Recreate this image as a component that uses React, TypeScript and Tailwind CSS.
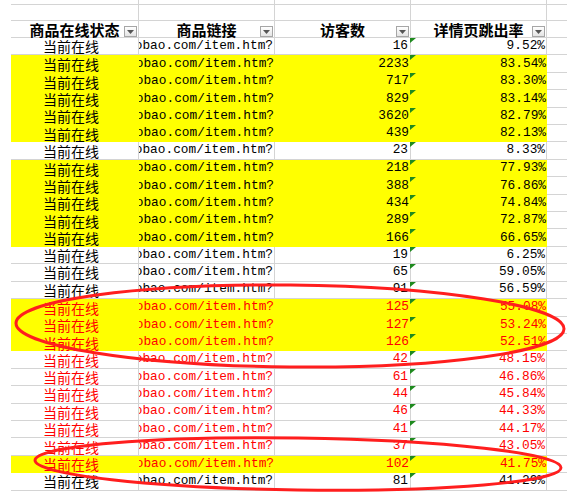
import React from "react";

type Row = { visits: number; rate: string; yellow?: boolean; red?: boolean };

const rows: Row[] = [
  { visits: 16, rate: "9.52%" },
  { visits: 2233, rate: "83.54%", yellow: true },
  { visits: 717, rate: "83.30%", yellow: true },
  { visits: 829, rate: "83.14%", yellow: true },
  { visits: 3620, rate: "82.79%", yellow: true },
  { visits: 439, rate: "82.13%", yellow: true },
  { visits: 23, rate: "8.33%" },
  { visits: 218, rate: "77.93%", yellow: true },
  { visits: 388, rate: "76.86%", yellow: true },
  { visits: 434, rate: "74.84%", yellow: true },
  { visits: 289, rate: "72.87%", yellow: true },
  { visits: 166, rate: "66.65%", yellow: true },
  { visits: 19, rate: "6.25%" },
  { visits: 65, rate: "59.05%" },
  { visits: 91, rate: "56.59%" },
  { visits: 125, rate: "55.08%", yellow: true, red: true },
  { visits: 127, rate: "53.24%", yellow: true, red: true },
  { visits: 126, rate: "52.51%", yellow: true, red: true },
  { visits: 42, rate: "48.15%", red: true },
  { visits: 61, rate: "46.86%", red: true },
  { visits: 44, rate: "45.84%", red: true },
  { visits: 46, rate: "44.33%", red: true },
  { visits: 41, rate: "44.17%", red: true },
  { visits: 37, rate: "43.05%", red: true },
  { visits: 102, rate: "41.75%", yellow: true, red: true },
  { visits: 81, rate: "41.29%" },
];

const cjk = "font-['Noto_Sans_CJK_SC',sans-serif]";
const mono = "font-['Liberation_Mono','Noto_Sans_CJK_SC',monospace]";

function FilterButton() {
  return (
    <span className="absolute right-[1px] bottom-0 w-[13px] h-[11px] border border-[#a6a6a6] bg-gradient-to-b from-white to-[#e4e4e4] flex items-center justify-center">
      <svg width="7" height="4" viewBox="0 0 7 4">
        <path d="M0 0 H7 L3.5 4 Z" fill="#555" />
      </svg>
    </span>
  );
}

function BlankRow({ h }: { h: string }) {
  return (
    <div className={`flex ${h}`}>
      <div className="w-[11px]" />
      <div className="w-[128px] border-r border-b border-[#d4d4d4]" />
      <div className="w-[136px] border-r border-b border-[#d4d4d4]" />
      <div className="w-[136px] border-r border-b border-[#d4d4d4]" />
      <div className="w-[136px] border-r border-b border-[#d4d4d4]" />
      <div className="w-[20px] border-b border-[#d4d4d4]" />
    </div>
  );
}

function HeaderCell({ label, width }: { label: string; width: string }) {
  return (
    <div className={`relative ${width} border-r border-b border-[#d4d4d4] flex items-center justify-center`}>
      <span className={`${cjk} font-bold text-[15px] leading-none text-black`}>{label}</span>
      <FilterButton />
    </div>
  );
}

function DataRow({ row }: { row: Row }) {
  const cell = row.yellow ? "bg-[#ffff00]" : "border-r border-b border-[#d4d4d4]";
  const color = row.red ? "text-[#ff0000]" : "text-black";

  return (
    <div className="flex h-[17.42px]">
      <div className="w-[11px]" />
      <div className={`w-[128px] ${cell} flex items-center pl-[32px]`}>
        <span className={`${cjk} text-[14px] leading-none ${color}`}>当前在线</span>
      </div>
      <div className={`w-[136px] ${cell} flex items-center justify-end overflow-hidden pr-[1px]`}>
        <span className={`${mono} text-[12.8px] leading-none whitespace-nowrap ${color}`}>taobao.com/item.htm?</span>
      </div>
      <div className={`w-[136px] ${cell} flex items-center justify-end pr-[2px]`}>
        <span className={`${mono} text-[12.8px] leading-none ${color}`}>{row.visits}</span>
      </div>
      <div className={`relative w-[136px] ${cell} flex items-center justify-end pr-[1px]`}>
        <svg className="absolute left-[-1px] top-0" width="6" height="5" viewBox="0 0 6 5">
          <path d="M0 0 H6 L0 5 Z" fill="#1f8a1f" />
        </svg>
        <span className={`${mono} text-[12.8px] leading-none ${color}`}>{row.rate}</span>
      </div>
      <div className="w-[20px] border-b border-[#d4d4d4]" />
    </div>
  );
}

export default function App() {
  return (
    <div className="relative w-[567px] h-[493px] overflow-hidden bg-white">
      <BlankRow h="h-[5px]" />
      <BlankRow h="h-[16px]" />
      <div className="flex h-[17px]">
        <div className="w-[11px]" />
        <HeaderCell label="商品在线状态" width="w-[128px]" />
        <HeaderCell label="商品链接" width="w-[136px]" />
        <HeaderCell label="访客数" width="w-[136px]" />
        <HeaderCell label="详情页跳出率" width="w-[136px]" />
        <div className="w-[20px] border-b border-[#d4d4d4]" />
      </div>
      {rows.map((row, i) => (
        <DataRow key={i} row={row} />
      ))}

      <svg className="absolute inset-0 pointer-events-none" width="567" height="493" viewBox="0 0 567 493">
        <ellipse cx="290" cy="326" rx="274" ry="41" fill="none" stroke="#ff1e1e" strokeWidth="3" transform="rotate(0.6 290 326)" />
        <ellipse cx="298" cy="464" rx="263" ry="26" fill="none" stroke="#ff1e1e" strokeWidth="3" transform="rotate(0.8 298 464)" />
      </svg>
    </div>
  );
}
